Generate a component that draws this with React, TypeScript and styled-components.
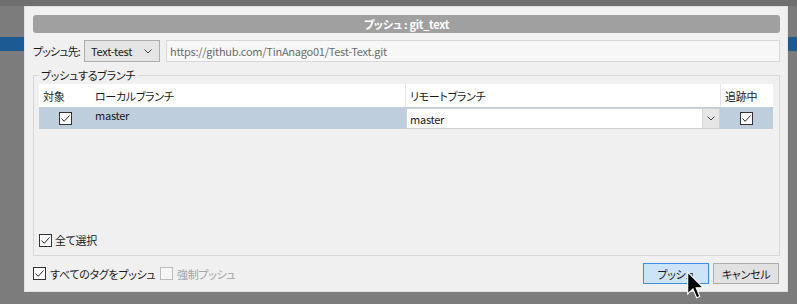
import React from "react";
import styled, { createGlobalStyle } from "styled-components";

const Global = createGlobalStyle`
  html, body { margin: 0; padding: 0; }
  body {
    width: 797px;
    height: 304px;
    overflow: hidden;
    font-family: "Noto Sans CJK JP", "Noto Sans", sans-serif;
    font-feature-settings: "palt";
    font-size: 11px;
    letter-spacing: -0.25px;
    color: #1a1a1a;
  }
  * { box-sizing: border-box; }
`;

const Screen = styled.div`
  position: relative;
  width: 797px;
  height: 304px;
  padding: 6px 0 0 24px;
  background: linear-gradient(
    to bottom,
    #6f6f6f 0 6px,
    #7c7c7c 6px 37px,
    #1b5a93 37px 51px,
    #7c7c7c 51px
  );
`;

const Dialog = styled.div`
  width: 764px;
  height: 286px;
  background: #f0f0f0;
  border: 1px solid #e2e2e2;
  padding: 8px 7px 7px 8px;
  display: flex;
  flex-direction: column;
`;

const TitleBar = styled.div`
  height: 18px;
  border-radius: 3px;
  background: #a0a0a0;
  color: #ffffff;
  font-weight: 700;
  font-size: 11px;
  letter-spacing: -0.3px;
  line-height: 18px;
  text-align: center;
  white-space: pre;
`;

const DestRow = styled.div`
  margin-top: 7px;
  height: 22px;
  display: flex;
  align-items: center;
`;

const Jp = styled.span<{ $muted?: boolean }>`
  font-size: 11px;
  letter-spacing: -0.3px;
  color: ${(p) => (p.$muted ? "#a3a3a3" : "#1a1a1a")};
  white-space: nowrap;
`;

const DestLabel = styled(Jp)`
  width: 51px;
  letter-spacing: -0.9px;
`;

const Select = styled.div`
  width: 76px;
  height: 22px;
  margin-right: 6px;
  background: #e5e5e5;
  border: 1px solid #adadad;
  display: flex;
  align-items: center;
  justify-content: space-between;
  padding: 0 7px 0 6px;
`;

const UrlBox = styled.div`
  flex: 1;
  height: 22px;
  background: #f7f7f7;
  border: 1px solid #d9d9d9;
  display: flex;
  align-items: center;
  padding-left: 3px;
  color: #6d6d6d;
`;

const Group = styled.fieldset`
  margin: 6px 0 0 0;
  flex: 1;
  min-height: 0;
  border: 1px solid #d7d7d7;
  padding: 2px 6px 7px 5px;
  display: flex;
  flex-direction: column;
`;

const Legend = styled.legend`
  padding: 0 3px 0 2px;
  line-height: 14px;
  font-size: 11px;
  letter-spacing: -0.3px;
`;

const Table = styled.div`
  flex: 1;
  display: grid;
  grid-template-columns: 52px 314px 315px 53px;
  grid-template-rows: 23px 22px;
  align-content: start;
`;

const HeadCell = styled.div<{ $sep?: boolean }>`
  background: #ffffff;
  border-left: ${(p) => (p.$sep ? "1px solid #e5e5e5" : "none")};
  display: flex;
  align-items: center;
  padding-left: 4px;
`;

const RowCell = styled.div<{ $center?: boolean; $top?: boolean; $flush?: boolean }>`
  background: #bfcedd;
  display: flex;
  align-items: ${(p) => (p.$top ? "flex-start" : "center")};
  justify-content: ${(p) => (p.$center ? "center" : "flex-start")};
  padding-left: ${(p) => (p.$center || p.$flush ? "0" : "4px")};
  line-height: 16px;
`;

const Combo = styled.div`
  margin: 1px 0 0 1px;
  width: 314px;
  height: 21px;
  background: #ffffff;
  border: 1px solid #d0d0d0;
  display: flex;
  align-items: stretch;
`;

const ComboText = styled.div`
  flex: 1;
  display: flex;
  align-items: center;
  padding-left: 3px;
`;

const ComboButton = styled.div`
  width: 17px;
  background: #e6e6e6;
  border-left: 1px solid #d8d8d8;
  display: flex;
  align-items: center;
  justify-content: center;
`;

const CheckLine = styled.label<{ $gap: number; $width?: number }>`
  display: flex;
  align-items: center;
  gap: ${(p) => p.$gap}px;
  width: ${(p) => (p.$width ? `${p.$width}px` : "auto")};
`;

const Box = styled.span<{ $disabled?: boolean }>`
  width: 13px;
  height: 13px;
  border: 1px solid ${(p) => (p.$disabled ? "#bcbcbc" : "#333333")};
  background: ${(p) => (p.$disabled ? "#f6f6f6" : "#ffffff")};
  display: inline-flex;
  align-items: center;
  justify-content: center;
  flex: none;
`;

const BottomRow = styled.div`
  margin-top: 7px;
  height: 21px;
  display: flex;
  align-items: center;
`;

const Options = styled.div`
  display: flex;
  align-items: center;
  flex: 1;
`;

const Buttons = styled.div`
  display: flex;
  gap: 4px;
  margin-right: 1px;
`;

const Button = styled.button<{ $primary?: boolean }>`
  width: 66px;
  height: 21px;
  padding: 0;
  font-family: inherit;
  font-feature-settings: "palt";
  font-size: 11px;
  letter-spacing: -0.3px;
  color: #1a1a1a;
  background: ${(p) => (p.$primary ? "#cce4f7" : "#e1e1e1")};
  border: 1px solid ${(p) => (p.$primary ? "#3d8ee0" : "#adadad")};
`;

const Cursor = styled.svg`
  position: absolute;
  left: 687px;
  top: 271px;
`;

const Check = () => (
  <svg width="11" height="11" viewBox="0 0 11 11">
    <path d="M1.5 5.5 L4.2 8.3 L9.5 2.5" fill="none" stroke="#222" strokeWidth="1" />
  </svg>
);

const Chevron = () => (
  <svg width="8" height="5" viewBox="0 0 8 5">
    <path d="M0.5 0.5 L4 4 L7.5 0.5" fill="none" stroke="#444" strokeWidth="1" />
  </svg>
);

export default function App() {
  return (
    <>
      <Global />
      <Screen>
        <Dialog>
          <TitleBar>プッシュ : git_text</TitleBar>
          <DestRow>
            <DestLabel>プッシュ先:</DestLabel>
            <Select>
              <span>Text-test</span>
              <Chevron />
            </Select>
            <UrlBox>https://github.com/TinAnago01/Test-Text.git</UrlBox>
          </DestRow>
          <Group>
            <Legend>プッシュするブランチ</Legend>
            <Table>
              <HeadCell><Jp>対象</Jp></HeadCell>
              <HeadCell><Jp>ローカルブランチ</Jp></HeadCell>
              <HeadCell $sep><Jp>リモートブランチ</Jp></HeadCell>
              <HeadCell $sep><Jp>追跡中</Jp></HeadCell>
              <RowCell $center><Box><Check /></Box></RowCell>
              <RowCell $top>master</RowCell>
              <RowCell $flush>
                <Combo>
                  <ComboText>master</ComboText>
                  <ComboButton><Chevron /></ComboButton>
                </Combo>
              </RowCell>
              <RowCell $center><Box><Check /></Box></RowCell>
            </Table>
            <CheckLine $gap={3}>
              <Box><Check /></Box>
              <Jp>全て選択</Jp>
            </CheckLine>
          </Group>
          <BottomRow>
            <Options>
              <CheckLine $gap={4} $width={127}>
                <Box><Check /></Box>
                <Jp>すべてのタグをプッシュ</Jp>
              </CheckLine>
              <CheckLine $gap={4}>
                <Box $disabled />
                <Jp $muted>強制プッシュ</Jp>
              </CheckLine>
            </Options>
            <Buttons>
              <Button $primary>プッシュ</Button>
              <Button>キャンセル</Button>
            </Buttons>
          </BottomRow>
        </Dialog>
        <Cursor width="17" height="29" viewBox="0 0 12 20">
          <path
            d="M0.5 0.5 L0.5 16 L4.2 12.4 L6.8 18.6 L9 17.7 L6.5 11.6 L11.5 11.6 Z"
            fill="#000"
            stroke="#fff"
            strokeWidth="0.8"
            strokeLinejoin="miter"
          />
        </Cursor>
      </Screen>
    </>
  );
}
